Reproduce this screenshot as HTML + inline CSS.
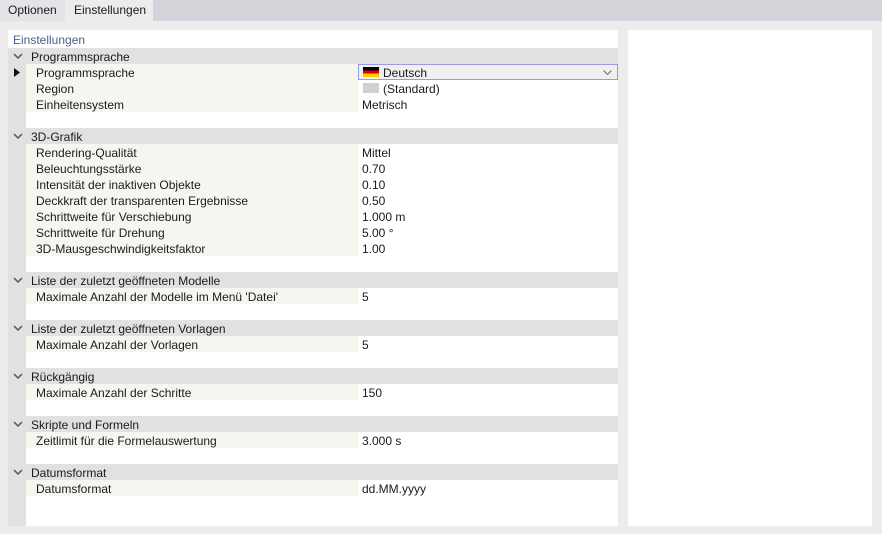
<!DOCTYPE html>
<html><head><meta charset="utf-8"><style>
*{margin:0;padding:0;box-sizing:border-box}
body{width:882px;height:534px;background:#ececec;font-family:"Liberation Sans",sans-serif;font-size:12px;color:#1a1a1a;position:relative;overflow:hidden}
.bar{position:absolute;left:0;top:0;width:882px;height:21px;background:#d4d3d9}
.tab{position:absolute;top:0;height:21px;line-height:21px;padding:0 8px;font-size:12px}
.lp{position:absolute;left:8px;top:30px;width:610px;height:496px;background:#fff}
.rp{position:absolute;left:628px;top:30px;width:244px;height:496px;background:#fff}
.gut{position:absolute;left:0;top:18px;width:18px;height:478px;background:#e1e1e1}
.ttl{position:absolute;left:5px;top:3px;color:#4a5f8c;font-size:12px}
.h{position:absolute;left:0;width:610px;height:16px;background:#e1e1e1;line-height:18px}
.h span{position:absolute;left:23px}
.h svg{position:absolute;left:5px;top:5px}
.r{position:absolute;left:18px;width:592px;height:16px;line-height:18px}
.r .n{position:absolute;left:0;width:332px;height:16px;background:#f6f6f0;padding-left:10px}
.r .v{position:absolute;left:336px}
</style></head><body>
<div class="bar"></div>
<div class="tab" style="left:0;background:#e4e4e8">Optionen</div>
<div class="tab" style="left:65px;width:88px;background:#ececec;padding-left:9px">Einstellungen</div>
<div class="lp">
<div class="gut"></div>
<div class="ttl">Einstellungen</div>

<div class="h" style="top:18px"><svg width="10" height="6"><path d="M1 1L5 5L9 1" stroke="#555" stroke-width="1.5" fill="none"/></svg><span>Programmsprache</span></div>
<svg style="position:absolute;left:6px;top:38px" width="6" height="9"><path d="M0 0L6 4.5L0 9Z" fill="#111"/></svg>
<div class="r" style="top:34px"><div class="n">Programmsprache</div>
<div style="position:absolute;left:332px;top:0;width:260px;height:16px;border:1px solid #9b9be0;background:#f0f0f0"></div>
<div style="position:absolute;left:337px;top:3px;width:16px;height:10px;background:linear-gradient(#000 0 33%,#d00 33% 66%,#fc0 66%)"></div>
<div class="v" style="left:357px">Deutsch</div>
<svg style="position:absolute;left:577px;top:6px" width="9" height="5"><path d="M0.5 0.5L4.5 4.5L8.5 0.5" stroke="#666" fill="none"/></svg>
</div>
<div class="r" style="top:50px"><div class="n">Region</div><div style="position:absolute;left:337px;top:3px;width:16px;height:10px;background:#d0d0d0"></div><div class="v" style="left:357px">(Standard)</div></div>
<div class="r" style="top:66px"><div class="n">Einheitensystem</div><div class="v">Metrisch</div></div>

<div class="h" style="top:98px"><svg width="10" height="6"><path d="M1 1L5 5L9 1" stroke="#555" stroke-width="1.5" fill="none"/></svg><span>3D-Grafik</span></div>
<div class="r" style="top:114px"><div class="n">Rendering-Qualität</div><div class="v">Mittel</div></div>
<div class="r" style="top:130px"><div class="n">Beleuchtungsstärke</div><div class="v">0.70</div></div>
<div class="r" style="top:146px"><div class="n">Intensität der inaktiven Objekte</div><div class="v">0.10</div></div>
<div class="r" style="top:162px"><div class="n">Deckkraft der transparenten Ergebnisse</div><div class="v">0.50</div></div>
<div class="r" style="top:178px"><div class="n">Schrittweite für Verschiebung</div><div class="v">1.000 m</div></div>
<div class="r" style="top:194px"><div class="n">Schrittweite für Drehung</div><div class="v">5.00 °</div></div>
<div class="r" style="top:210px"><div class="n">3D-Mausgeschwindigkeitsfaktor</div><div class="v">1.00</div></div>

<div class="h" style="top:242px"><svg width="10" height="6"><path d="M1 1L5 5L9 1" stroke="#555" stroke-width="1.5" fill="none"/></svg><span>Liste der zuletzt geöffneten Modelle</span></div>
<div class="r" style="top:258px"><div class="n">Maximale Anzahl der Modelle im Menü 'Datei'</div><div class="v">5</div></div>

<div class="h" style="top:290px"><svg width="10" height="6"><path d="M1 1L5 5L9 1" stroke="#555" stroke-width="1.5" fill="none"/></svg><span>Liste der zuletzt geöffneten Vorlagen</span></div>
<div class="r" style="top:306px"><div class="n">Maximale Anzahl der Vorlagen</div><div class="v">5</div></div>

<div class="h" style="top:338px"><svg width="10" height="6"><path d="M1 1L5 5L9 1" stroke="#555" stroke-width="1.5" fill="none"/></svg><span>Rückgängig</span></div>
<div class="r" style="top:354px"><div class="n">Maximale Anzahl der Schritte</div><div class="v">150</div></div>

<div class="h" style="top:386px"><svg width="10" height="6"><path d="M1 1L5 5L9 1" stroke="#555" stroke-width="1.5" fill="none"/></svg><span>Skripte und Formeln</span></div>
<div class="r" style="top:402px"><div class="n">Zeitlimit für die Formelauswertung</div><div class="v">3.000 s</div></div>

<div class="h" style="top:434px"><svg width="10" height="6"><path d="M1 1L5 5L9 1" stroke="#555" stroke-width="1.5" fill="none"/></svg><span>Datumsformat</span></div>
<div class="r" style="top:450px"><div class="n">Datumsformat</div><div class="v">dd.MM.yyyy</div></div>
</div>
<div class="rp"></div>
</body></html>
